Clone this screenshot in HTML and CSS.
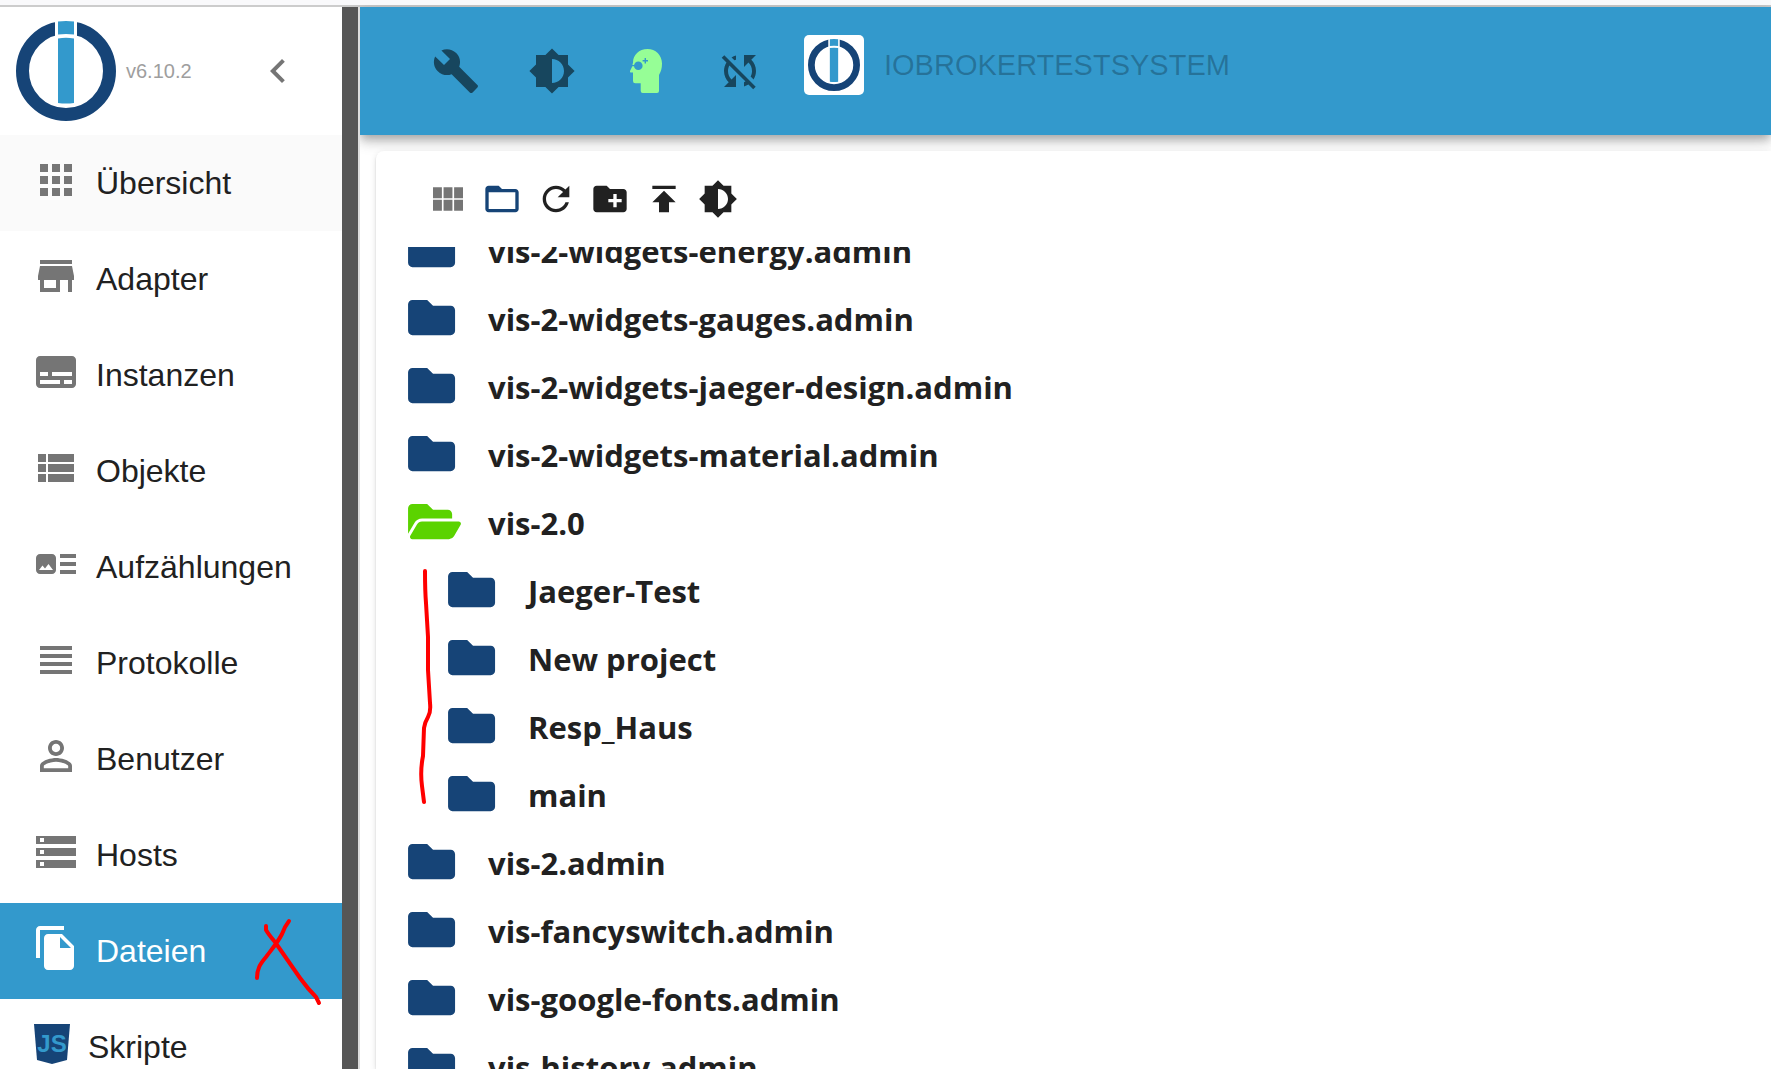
FILE: index.html
```
<!DOCTYPE html>
<html lang="de">

<head>
    <meta charset="UTF-8">
    <title>ioBroker Admin</title>
    <link rel="stylesheet" href="styles.css">
</head>

<body>
    <!-- shared shapes -->
    <svg class="sprite" aria-hidden="true">
        <symbol id="logo" viewBox="0 0 100 100">
            <circle cx="50" cy="50" r="43.5" fill="none" stroke="#164477" stroke-width="13" />
            <path fill="#fff" d="M39 0h22v31H39z" />
            <path fill="#3399cc" d="M42 .5q8-1 16 0V13.500q-8-1-16 0zM42 17.500q8-1.500 16 0V82q-8 1-16 0z" />
        </symbol>
        <symbol id="brightness" viewBox="0 0 24 24">
            <path d="M20 15.31L23.31 12 20 8.69V4h-4.69L12 .69 8.69 4H4v4.69L.69 12 4 15.31V20h4.69L12 23.31 15.31 20H20v-4.69zM12 18V6c3.31 0 6 2.69 6 6s-2.69 6-6 6z" />
        </symbol>
        <symbol id="folder" viewBox="0 0 576 512">
            <path d="M464 128H272l-64-64H48C21.49 64 0 85.49 0 112v288c0 26.51 21.49 48 48 48h416c26.51 0 48-21.49 48-48V176c0-26.51-21.49-48-48-48z" />
        </symbol>
        <symbol id="folderOpen" viewBox="0 0 576 512">
            <path d="M572.694 292.093L500.27 416.248A63.997 63.997 0 0 1 444.989 448H45.025c-18.523 0-30.064-20.093-20.731-36.093l72.424-124.155A64 64 0 0 1 152 256h399.964c18.523 0 30.064 20.093 20.73 36.093zM152 224h328v-48c0-26.51-21.49-48-48-48H272l-64-64H48C21.49 64 0 85.49 0 112v278.046l69.077-118.418C86.214 242.25 117.989 224 152 224z" />
        </symbol>
    </svg>

    <div class="app">
        <aside class="sidebar">
            <div class="sidebar-head">
                <svg class="logo"><use href="#logo" /></svg>
                <span class="version">v6.10.2</span>
                <button class="collapse" type="button" aria-label="Menü einklappen">
                    <svg class="icon" viewBox="0 0 24 24"><path d="M15.410 7.410L14 6l-6 6 6 6 1.410-1.410L10.830 12z" /></svg>
                </button>
            </div>
            <nav>
                <a class="item first" href="#overview">
                    <svg class="icon" viewBox="0 0 24 24"><path d="M4 4h4v4H4zM10 4h4v4h-4zM16 4h4v4h-4zM4 10h4v4H4zM10 10h4v4h-4zM16 10h4v4h-4zM4 16h4v4H4zM10 16h4v4h-4zM16 16h4v4h-4z" /></svg>
                    <span>Übersicht</span>
                </a>
                <a class="item" href="#adapters">
                    <svg class="icon" viewBox="0 0 24 24"><path d="M20 4H4v2h16V4zm1 10v-2l-1-5H4l-1 5v2h1v6h10v-6h4v6h2v-6h1zm-9 4H6v-4h6v4z" /></svg>
                    <span>Adapter</span>
                </a>
                <a class="item" href="#instances">
                    <svg class="icon" viewBox="0 0 24 24"><path d="M20 4H4c-1.100 0-2 .9-2 2v12c0 1.100.9 2 2 2h16c1.100 0 2-.9 2-2V6c0-1.100-.9-2-2-2zM4 12h4v2H4v-2zm10 6H4v-2h10v2zm6 0h-4v-2h4v2zm0-4H10v-2h10v2z" /></svg>
                    <span>Instanzen</span>
                </a>
                <a class="item" href="#objects">
                    <svg class="icon" viewBox="0 0 24 24"><path d="M3 5h4v4H3zM8 5h13v4H8zM3 10h4v4H3zM8 10h13v4H8zM3 15h4v4H3zM8 15h13v4H8z" /></svg>
                    <span>Objekte</span>
                </a>
                <a class="item" href="#enums">
                    <svg class="icon" viewBox="0 0 24 24"><path d="M22 13h-8v-2h8v2zm0-6h-8v2h8V7zm-8 10h8v-2h-8v2zm-2-8v6c0 1.100-.9 2-2 2H4c-1.100 0-2-.9-2-2V9c0-1.100.9-2 2-2h6c1.100 0 2 .9 2 2zm-1.500 6l-2.250-3-1.750 2.260-1.250-1.510L3.500 15h7z" /></svg>
                    <span>Aufzählungen</span>
                </a>
                <a class="item" href="#logs">
                    <svg class="icon" viewBox="0 0 24 24"><path d="M4 5h16v2H4zM4 9h16v2H4zM4 13h16v2H4zM4 17h16v2H4z" /></svg>
                    <span>Protokolle</span>
                </a>
                <a class="item" href="#users">
                    <svg class="icon" viewBox="0 0 24 24"><path d="M12 5.900c1.160 0 2.100.94 2.100 2.100s-.94 2.100-2.100 2.100S9.900 9.160 9.900 8s.94-2.100 2.100-2.100m0 9c2.970 0 6.100 1.460 6.100 2.100v1.100H5.900V17c0-.64 3.130-2.100 6.100-2.100M12 4C9.790 4 8 5.790 8 8s1.790 4 4 4 4-1.790 4-4-1.790-4-4-4zm0 9c-2.670 0-8 1.340-8 4v3h16v-3c0-2.660-5.330-4-8-4z" /></svg>
                    <span>Benutzer</span>
                </a>
                <a class="item" href="#hosts">
                    <svg class="icon" viewBox="0 0 24 24"><path d="M2 20h20v-4H2v4zm2-3h2v2H4v-2zM2 4v4h20V4H2zm4 3H4V5h2v2zm-4 7h20v-4H2v4zm2-3h2v2H4v-2z" /></svg>
                    <span>Hosts</span>
                </a>
                <a class="item selected" href="#files" aria-current="page">
                    <svg class="icon" viewBox="0 0 24 24"><path d="M16 1H4c-1.100 0-2 .9-2 2v14h2V3h12V1zm-1 4l6 6v10c0 1.100-.9 2-2 2H7.990C6.890 23 6 22.100 6 21l.01-14c0-1.100.89-2 1.990-2h7zm-1 7h5.500L14 6.500V12z" /></svg>
                    <span>Dateien</span>
                    <svg class="mark cross" viewBox="0 0 76 96">
                        <path d="M39 8q-4 5-7 13c-4 8-10 15-16 23-6 7-9 12-9 21M16 13v4q3 5 9 12l25 36q8 11 16 19l3 6" />
                    </svg>
                </a>
                <a class="item" href="#scripts">
                    <svg class="script-icon" viewBox="0 0 40 40">
                        <path fill="#164477" d="M2 0h36l-3 36-15 4-15-4z" />
                        <text x="20" y="28">JS</text>
                    </svg>
                    <span>Skripte</span>
                </a>
            </nav>
        </aside>

        <main class="main">
            <header class="appbar">
                <button type="button" aria-label="Systemeinstellungen">
                    <svg class="icon" viewBox="0 0 24 24"><path d="M22.700 19l-9.100-9.100c.9-2.300.4-5-1.500-6.900-2-2-5-2.400-7.400-1.300L9 6 6 9 1.600 4.700C.4 7.100.9 10.100 2.900 12.100c1.900 1.900 4.600 2.400 6.900 1.500l9.100 9.100c.4.4 1 .4 1.400 0l2.300-2.300c.5-.4.5-1.100.1-1.400z" /></svg>
                </button>
                <button type="button" aria-label="Farbschema">
                    <svg class="icon"><use href="#brightness" /></svg>
                </button>
                <button type="button" aria-label="Expertenmodus">
                    <svg class="expert" viewBox="0 0 44 44">
                        <path fill="#96fe96" d="M23.500 0C15 0 9 6 9 13.500l-1 4.500-2 4q-.5 1.500 1 1.500h2V32q0 2.300 2.300 2.300h5.400V42q0 2 2 2H33q2 0 2-2V26q3-5 3-11.500C38 6 31.500 0 23.500 0z" />
                        <path fill="#3399cc" d="M7.500 16h4v1.200h-4zM20.600 9h1.400v2h2v1.400h-2v2h-1.400v-2h-2V11h2z" />
                        <circle cx="14.300" cy="16.700" r="4.300" fill="#3399cc" />
                    </svg>
                </button>
                <button type="button" aria-label="Synchronisation aus">
                    <svg class="icon" viewBox="0 0 24 24"><path d="M10 6.350V4.260c-.8.21-1.550.54-2.230.96l1.460 1.460c.25-.12.5-.24.77-.33zm-7.140-.94l2.360 2.360C4.450 8.990 4 10.440 4 12c0 2.210.91 4.200 2.360 5.640L4 20h6v-6l-2.240 2.240C6.680 15.150 6 13.660 6 12c0-1 .25-1.940.68-2.770l8.080 8.080c-.25.13-.5.25-.77.34v2.090c.8-.21 1.550-.54 2.230-.96l2.360 2.360 1.270-1.270L4.140 4.140 2.860 5.410zM20 4h-6v6l2.240-2.240C17.320 8.850 18 10.340 18 12c0 1-.25 1.940-.68 2.770l1.460 1.460C19.550 15.010 20 13.560 20 12c0-2.210-.91-4.200-2.360-5.640L20 4z" /></svg>
                </button>
                <div class="host">
                    <svg class="host-logo"><use href="#logo" /></svg>
                    <span>IOBROKERTESTSYSTEM</span>
                </div>
            </header>

            <section class="paper">
                <div class="toolbar">
                    <button class="muted" type="button" aria-label="Kachelansicht">
                        <svg viewBox="0 0 24 24"><path d="M3 5h5.330v6.500H3zM9.330 5h5.340v6.500H9.330zM15.670 5H21v6.500h-5.330zM3 12.500h5.330V19H3zM9.330 12.500h5.340V19H9.330zM15.670 12.500H21V19h-5.330z" /></svg>
                    </button>
                    <button class="active" type="button" aria-label="Leere Ordner">
                        <svg viewBox="0 0 24 24"><path d="M20 6h-8l-2-2H4c-1.100 0-1.990.9-1.990 2L2 18c0 1.100.9 2 2 2h16c1.100 0 2-.9 2-2V8c0-1.100-.9-2-2-2zm0 12H4V8h16v10z" /></svg>
                    </button>
                    <button type="button" aria-label="Aktualisieren">
                        <svg viewBox="0 0 24 24"><path d="M17.650 6.350C16.200 4.900 14.210 4 12 4c-4.420 0-7.990 3.580-7.990 8s3.570 8 7.990 8c3.730 0 6.840-2.550 7.730-6h-2.080c-.82 2.330-3.040 4-5.650 4-3.310 0-6-2.690-6-6s2.690-6 6-6c1.660 0 3.140.69 4.220 1.780L13 11h7V4l-2.350 2.350z" /></svg>
                    </button>
                    <button type="button" aria-label="Ordner anlegen">
                        <svg viewBox="0 0 24 24"><path d="M20 6h-8l-2-2H4c-1.110 0-1.990.89-1.990 2L2 18c0 1.110.89 2 2 2h16c1.110 0 2-.89 2-2V8c0-1.110-.89-2-2-2zm-1 8h-3v3h-2v-3h-3v-2h3V9h2v3h3v2z" /></svg>
                    </button>
                    <button type="button" aria-label="Hochladen">
                        <svg viewBox="0 0 24 24"><path d="M5 4v2h14V4H5zm0 10h4v6h6v-6h4l-7-7-7 7z" /></svg>
                    </button>
                    <button type="button" aria-label="Hintergrund">
                        <svg><use href="#brightness" /></svg>
                    </button>
                </div>

                <div class="files">
                    <ul class="tree">
                        <li><div class="row"><svg><use href="#folder" /></svg><span>vis-2-widgets-energy.admin</span></div></li>
                        <li><div class="row"><svg><use href="#folder" /></svg><span>vis-2-widgets-gauges.admin</span></div></li>
                        <li><div class="row"><svg><use href="#folder" /></svg><span>vis-2-widgets-jaeger-design.admin</span></div></li>
                        <li><div class="row"><svg><use href="#folder" /></svg><span>vis-2-widgets-material.admin</span></div></li>
                        <li>
                            <div class="row open"><svg><use href="#folderOpen" /></svg><span>vis-2.0</span></div>
                            <ul class="children">
                                <li><div class="row"><svg><use href="#folder" /></svg><span>Jaeger-Test</span></div></li>
                                <li><div class="row"><svg><use href="#folder" /></svg><span>New project</span></div></li>
                                <li><div class="row"><svg><use href="#folder" /></svg><span>Resp_Haus</span></div></li>
                                <li><div class="row"><svg><use href="#folder" /></svg><span>main</span></div></li>
                            </ul>
                            <svg class="mark line" viewBox="0 0 20 240">
                                <path d="M8 4q0 20 1 32l2 34v33l2 33q1 9-2 14-3 5-4 11l-1 28q-3 15-1 30l2 16" />
                            </svg>
                        </li>
                        <li><div class="row"><svg><use href="#folder" /></svg><span>vis-2.admin</span></div></li>
                        <li><div class="row"><svg><use href="#folder" /></svg><span>vis-fancyswitch.admin</span></div></li>
                        <li><div class="row"><svg><use href="#folder" /></svg><span>vis-google-fonts.admin</span></div></li>
                        <li><div class="row"><svg><use href="#folder" /></svg><span>vis-history.admin</span></div></li>
                    </ul>
                </div>
            </section>
        </main>
    </div>
</body>

</html>
```

FILE: styles.css
```
* {
    box-sizing: border-box;
}

body {
    margin: 0;
    height: 100vh;
    overflow: hidden;
    display: flex;
    flex-direction: column;
    font-family: "Liberation Sans", Arial, sans-serif;
    font-size: 32px;
    color: #212121;
    background: #fff;
    border-top: 5px solid #f9f9fb;
}

button {
    display: flex;
    align-items: center;
    justify-content: center;
    padding: 0;
    border: none;
    background: none;
    color: inherit;
    cursor: pointer;
}

svg {
    display: block;
    flex: none;
    fill: currentColor;
}

ul {
    list-style: none;
    margin: 0;
    padding: 0;
}

.sprite {
    display: none;
}

.icon {
    width: 48px;
    height: 48px;
}

.app {
    flex: 1;
    min-height: 0;
    display: flex;
    border-top: 2px solid #ccc;
}

/* sidebar */
.sidebar {
    flex: none;
    width: 360px;
    overflow: hidden;
    position: relative;
    z-index: 2;
    background: #fff;
    border-right: 2px solid #ddd;
    box-shadow: inset -16px 0 #565656;
    padding-right: 16px;
}

.sidebar-head {
    height: 128px;
    display: flex;
    align-items: center;
    padding: 0 40px 0 16px;
}

.logo {
    width: 100px;
    height: 100px;
}

.version {
    margin-left: 10px;
    font-size: 20px;
    color: #9e9e9e;
}

.collapse {
    margin-left: auto;
    color: #757575;
}

.item {
    position: relative;
    display: flex;
    align-items: center;
    gap: 16px;
    height: 96px;
    padding-left: 32px;
    color: #212121;
    text-decoration: none;
}

.item .icon {
    margin-bottom: 6px;
    color: #757575;
}

.item.first {
    background: #fafafa;
}

.item.selected,
.item.selected .icon {
    color: #fff;
}

.item.selected {
    background: #3399cc;
}

.script-icon {
    width: 40px;
    height: 40px;
    margin-bottom: 6px;
}

.script-icon text {
    fill: #3399cc;
    font-family: "Liberation Sans", sans-serif;
    font-size: 24px;
    font-weight: bold;
    text-anchor: middle;
}

/* red pen marks */
.mark {
    position: absolute;
    fill: none;
    stroke: #f00;
    stroke-width: 4px;
    stroke-linecap: round;
    stroke-linejoin: round;
}

.cross {
    left: 250px;
    top: 10px;
    width: 76px;
    height: 96px;
    z-index: 1;
}

.line {
    left: 9px;
    top: 80px;
    width: 20px;
    height: 240px;
}

/* app bar */
.main {
    flex: 1;
    min-width: 0;
    display: flex;
    flex-direction: column;
}

.appbar {
    flex: none;
    height: 128px;
    display: flex;
    align-items: center;
    gap: 48px;
    padding-left: 72px;
    background: #3399cc;
    color: rgba(0, 0, 0, 0.54);
    box-shadow: 0 4px 8px -2px rgba(0, 0, 0, 0.2), 0 8px 10px rgba(0, 0, 0, 0.14), 0 2px 20px rgba(0, 0, 0, 0.12);
}

.expert {
    width: 44px;
    height: 44px;
}

.host {
    display: flex;
    align-items: center;
    gap: 20px;
    margin: 0 0 12px -8px;
    font-size: 29px;
    color: rgba(0, 0, 0, 0.25);
}

.host-logo {
    width: 60px;
    height: 60px;
    padding: 4px;
    background: #fff;
    border-radius: 5px;
}

/* file browser */
.paper {
    flex: 1;
    min-height: 0;
    position: relative;
    display: flex;
    flex-direction: column;
    margin: 16px 0 0 16px;
    padding-left: 32px;
    background: #fff;
    border-radius: 8px 0 0 0;
    box-shadow: 0 4px 2px -2px rgba(0, 0, 0, 0.2), 0 2px 2px rgba(0, 0, 0, 0.14), 0 2px 6px rgba(0, 0, 0, 0.12);
}

.toolbar {
    flex: none;
    height: 96px;
    display: flex;
    align-items: center;
    gap: 14px;
    padding-left: 20px;
}

.toolbar svg {
    width: 40px;
    height: 40px;
}

.toolbar .muted {
    color: #757575;
}

.toolbar .active {
    color: #164477;
}

.files {
    flex: 1;
    min-height: 0;
    overflow: hidden;
}

/* list is scrolled down a bit */
.tree {
    margin-top: -32px;
}

.tree li {
    position: relative;
}

.children {
    padding-left: 40px;
}

.row {
    display: flex;
    align-items: center;
    height: 68px;
    gap: 27px;
    font-family: "Segoe UI", "Open Sans", "Noto Sans", sans-serif;
    font-size: 31px;
    font-weight: 700;
}

.row svg {
    width: 53px;
    height: 47px;
    color: #164477;
}

.row.open svg {
    color: #5bd300;
}

.row span {
    padding-top: 4px;
    white-space: nowrap;
}
```
